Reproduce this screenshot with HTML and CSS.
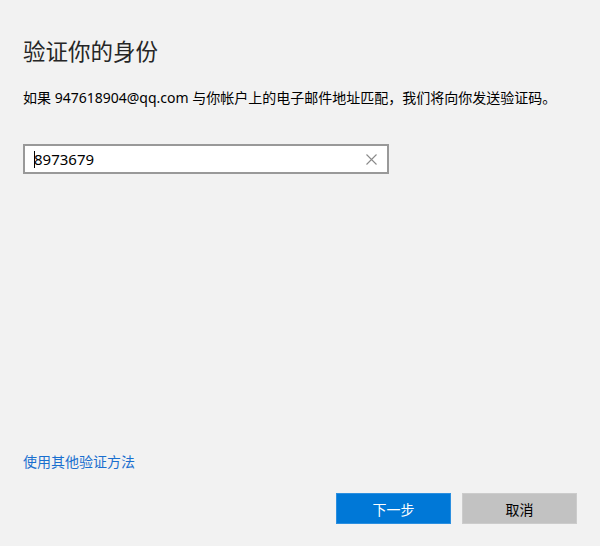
FILE: index.html
```html
<!DOCTYPE html>
<html lang="zh-CN">
<head>
<meta charset="utf-8">
<link rel="stylesheet" href="styles.css">
</head>
<body>
<div class="dialog">
  <h1 class="title">验证你的身份</h1>
  <p class="desc">如果 947618904@qq.com 与你帐户上的电子邮件地址匹配，我们将向你发送验证码。</p>
  <div class="field">
    <span class="caret"></span><span class="value">8973679</span>
    <svg class="clear" width="11" height="11" viewBox="0 0 11 11"><path d="M0.5 0.5 L10.5 10.5 M10.5 0.5 L0.5 10.5" stroke="#8a8a8a" stroke-width="1.1" fill="none"/></svg>
  </div>
  <a class="link" href="#">使用其他验证方法</a>
  <div class="actions">
    <button class="btn primary">下一步</button>
    <button class="btn secondary">取消</button>
  </div>
</div>
</body>
</html>
```
FILE: styles.css
```css
html, body {
  margin: 0;
  padding: 0;
  background: #f2f2f2;
}
body {
  font-family: "Segoe UI", "Noto Sans", "Noto Sans CJK SC", sans-serif;
  color: #000;
}
.dialog {
  box-sizing: border-box;
  height: 546px;
  padding: 37px 23px 22px 23px;
  display: flex;
  flex-direction: column;
}
.title {
  margin: 0;
  font-size: 22.5px;
  font-weight: 400;
  line-height: 30px;
  color: #262626;
}
.desc {
  margin: 21px 0 0 0;
  font-size: 14px;
  line-height: 20px;
  color: #000;
}
.field {
  margin-top: 36px;
  box-sizing: border-box;
  width: 366px;
  height: 30px;
  border: 2px solid #999;
  background: #fff;
  display: flex;
  align-items: center;
  padding: 0 8px 0 9px;
}
.caret {
  width: 1px;
  height: 17px;
  background: #000;
  margin-right: -1px;
}
.value {
  font-size: 15px;
  color: #000;
  flex: 1;
}
.clear {
  display: block;
  margin-right: 2px;
}
.link {
  margin-top: auto;
  align-self: flex-start;
  font-size: 14px;
  line-height: 20px;
  color: #1a6fcf;
  text-decoration: none;
}
.actions {
  margin-top: 21px;
  display: flex;
  justify-content: flex-end;
  gap: 11px;
}
.btn {
  width: 115px;
  height: 31px;
  font-family: inherit;
  font-size: 14px;
  border: 1px solid transparent;
  padding: 0;
}
.primary {
  background: #0078d7;
  border-color: #2b8fe0;
  color: #fff;
}
.secondary {
  background: #c2c2c2;
  border-color: #cccccc;
  color: #000;
}
```
